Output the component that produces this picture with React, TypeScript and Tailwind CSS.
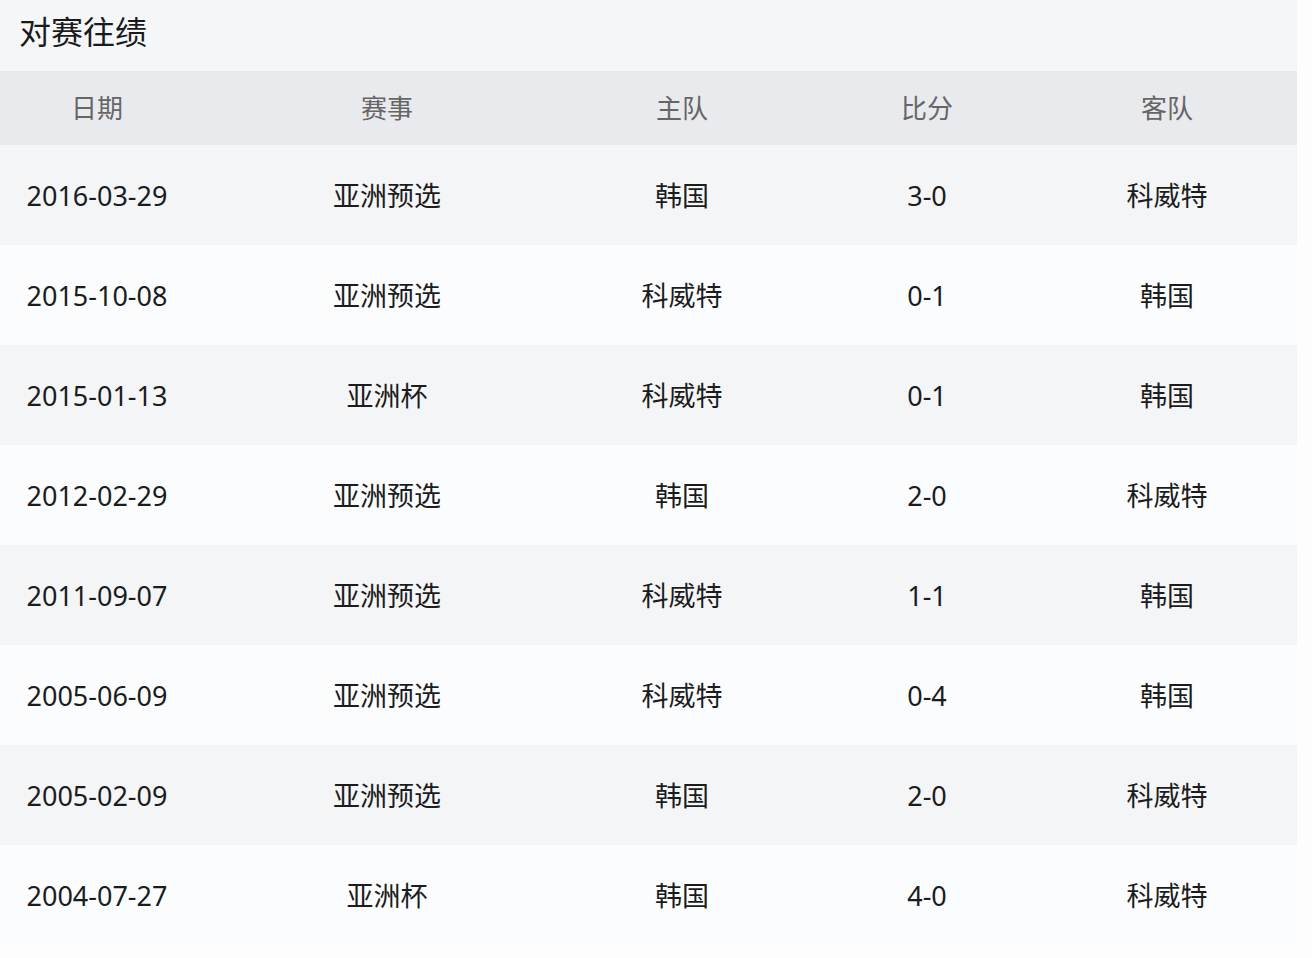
import React from "react";

const rows = [
  ["2016-03-29", "亚洲预选", "韩国", "3-0", "科威特"],
  ["2015-10-08", "亚洲预选", "科威特", "0-1", "韩国"],
  ["2015-01-13", "亚洲杯", "科威特", "0-1", "韩国"],
  ["2012-02-29", "亚洲预选", "韩国", "2-0", "科威特"],
  ["2011-09-07", "亚洲预选", "科威特", "1-1", "韩国"],
  ["2005-06-09", "亚洲预选", "科威特", "0-4", "韩国"],
  ["2005-02-09", "亚洲预选", "韩国", "2-0", "科威特"],
  ["2004-07-27", "亚洲杯", "韩国", "4-0", "科威特"],
];

const headers = ["日期", "赛事", "主队", "比分", "客队"];

const grid = "grid grid-cols-[194px_386px_204px_286px_1fr]";

export default function App() {
  return (
    <div
      className="w-[1312px] h-[958px] bg-[#fdfdfe] overflow-hidden"
      style={{ fontFamily: '"Noto Sans", "Noto Sans CJK SC", sans-serif' }}
    >
      <div className="w-[1297px]">
        <div className="h-[71px] bg-[#f5f6f8] flex items-center pl-[19px] pb-[7px]">
          <span className="text-[32px] text-[#1a1a1a] leading-none">对赛往绩</span>
        </div>
        <div className={`${grid} h-[74px] bg-[#e9eaee] items-center text-[26px] text-[#666] leading-none`}>
          {headers.map((h, i) => (
            <div key={h} className={`text-center ${i === 4 ? "pr-[33px]" : ""}`}>
              {h}
            </div>
          ))}
        </div>
        {rows.map((r, ri) => (
          <div
            key={ri}
            className={`${grid} h-[100px] items-center text-[27px] text-[#1c1c1c] leading-none ${
              ri % 2 === 0 ? "bg-[#f4f5f7]" : "bg-[#fbfcfe]"
            }`}
          >
            {r.map((c, i) => (
              <div key={i} className={`text-center ${i === 4 ? "pr-[33px]" : ""}`}>
                {c}
              </div>
            ))}
          </div>
        ))}
      </div>
    </div>
  );
}
